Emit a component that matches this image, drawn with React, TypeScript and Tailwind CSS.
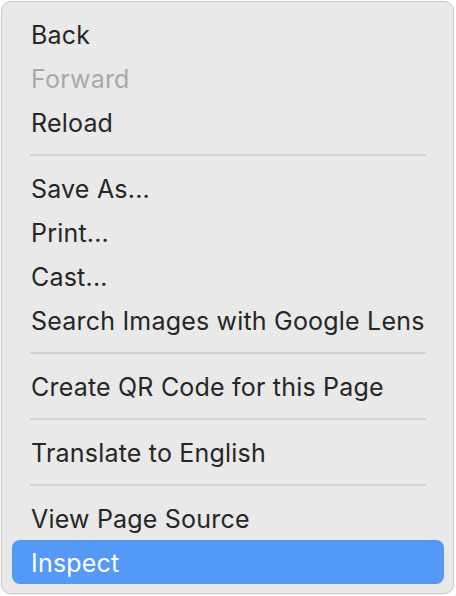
import React from "react";

type Entry = { label: string; disabled?: boolean; active?: boolean } | "sep";

const entries: Entry[] = [
  { label: "Back" },
  { label: "Forward", disabled: true },
  { label: "Reload" },
  "sep",
  { label: "Save As..." },
  { label: "Print..." },
  { label: "Cast..." },
  { label: "Search Images with Google Lens" },
  "sep",
  { label: "Create QR Code for this Page" },
  "sep",
  { label: "Translate to English" },
  "sep",
  { label: "View Page Source" },
  { label: "Inspect", active: true },
];

export default function App() {
  return (
    <div
      className="w-[456px] h-[596px] bg-white overflow-hidden"
      style={{ fontFamily: "Inter, 'Noto Sans', 'Liberation Sans', sans-serif" }}
    >
      <div className="ml-[1px] mt-[1px] w-[453px] rounded-[10px] border border-[#c9c9c9] bg-[#e9e9e9] pt-[10px] pb-[9px] pl-[10px] pr-[9px] shadow-[0_1px_3px_rgba(0,0,0,0.08)]">
        {entries.map((e, i) =>
          e === "sep" ? (
            <div key={i} className="h-[22px] flex items-center px-[18px]">
              <div className="h-[2px] w-full bg-[#d2d2d2]" />
            </div>
          ) : (
            <div
              key={i}
              className={
                "h-[44px] flex items-center px-[19px] pt-[2px] rounded-[8px] text-[25px] leading-none tracking-[0.2px] " +
                (e.active
                  ? "bg-[#5599f6] text-white"
                  : e.disabled
                  ? "text-[#a9a9a9]"
                  : "text-[#262626]")
              }
            >
              {e.label}
            </div>
          )
        )}
      </div>
    </div>
  );
}
